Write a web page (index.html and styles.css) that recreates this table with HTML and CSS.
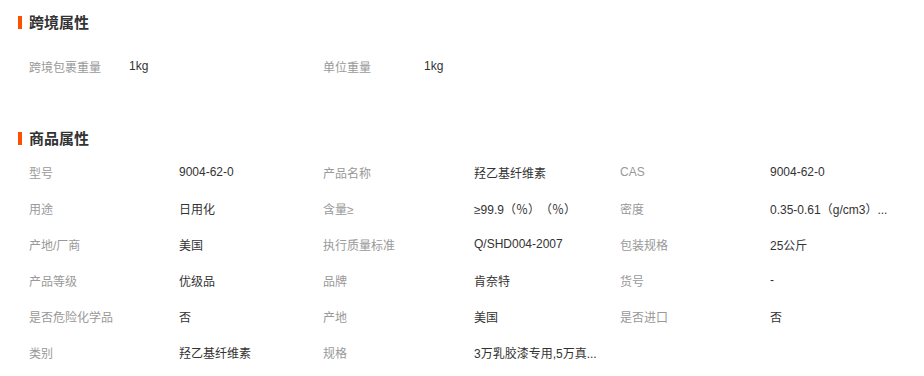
FILE: index.html
```html
<!DOCTYPE html>
<html lang="zh-CN">
<head>
<meta charset="utf-8">
<title>属性</title>
<link rel="stylesheet" href="styles.css">
</head>
<body>
<div class="page">
  <section class="section">
    <h2 class="title"><span class="bar"></span>跨境属性</h2>
    <div class="grid grid-cb">
      <div class="label">跨境包裹重量</div><div class="value">1kg</div>
      <div class="label">单位重量</div><div class="value">1kg</div>
    </div>
  </section>
  <section class="section section-2">
    <h2 class="title"><span class="bar"></span>商品属性</h2>
    <div class="grid grid-attr">
      <div class="label">型号</div><div class="value">9004-62-0</div>
      <div class="label">产品名称</div><div class="value">羟乙基纤维素</div>
      <div class="label">CAS</div><div class="value">9004-62-0</div>

      <div class="label">用途</div><div class="value">日用化</div>
      <div class="label">含量≥</div><div class="value">≥99.9（％）（％）</div>
      <div class="label">密度</div><div class="value">0.35-0.61（g/cm3）...</div>

      <div class="label">产地/厂商</div><div class="value">美国</div>
      <div class="label">执行质量标准</div><div class="value">Q/SHD004-2007</div>
      <div class="label">包装规格</div><div class="value">25公斤</div>

      <div class="label">产品等级</div><div class="value">优级品</div>
      <div class="label">品牌</div><div class="value">肯奈特</div>
      <div class="label">货号</div><div class="value">-</div>

      <div class="label">是否危险化学品</div><div class="value">否</div>
      <div class="label">产地</div><div class="value">美国</div>
      <div class="label">是否进口</div><div class="value">否</div>

      <div class="label">类别</div><div class="value">羟乙基纤维素</div>
      <div class="label">规格</div><div class="value">3万乳胶漆专用,5万真...</div>
      <div class="label"></div><div class="value"></div>
    </div>
  </section>
</div>
</body>
</html>
```

FILE: styles.css
```css
html, body {
  margin: 0;
  padding: 0;
  background: #fff;
}
body {
  font-family: "Liberation Sans", "Noto Sans CJK SC", sans-serif;
  font-size: 12px;
  color: #333;
  text-spacing-trim: space-all;
}
.page {
  padding-top: 12px;
}
.title {
  display: flex;
  align-items: center;
  margin: 0;
  padding-left: 18px;
  height: 20px;
  line-height: 20px;
  font-size: 15px;
  font-weight: bold;
  color: #333;
  font-family: "Noto Sans CJK SC", sans-serif;
}
.bar {
  display: block;
  width: 4px;
  height: 13px;
  background: #ff5000;
  margin-right: 7px;
}
.grid {
  display: grid;
  padding-left: 29px;
  grid-auto-rows: 36px;
  align-items: center;
}
.grid-cb {
  margin-top: 16px;
  grid-template-columns: 100px 194px 101px 1fr;
}
.section-2 {
  margin-top: 44px;
}
.grid-attr {
  margin-top: 6px;
  grid-template-columns: 150px 144px 151px 146px 150px 1fr;
}
.label {
  color: #999;
  white-space: nowrap;
}
.value {
  color: #333;
  white-space: nowrap;
}
```
